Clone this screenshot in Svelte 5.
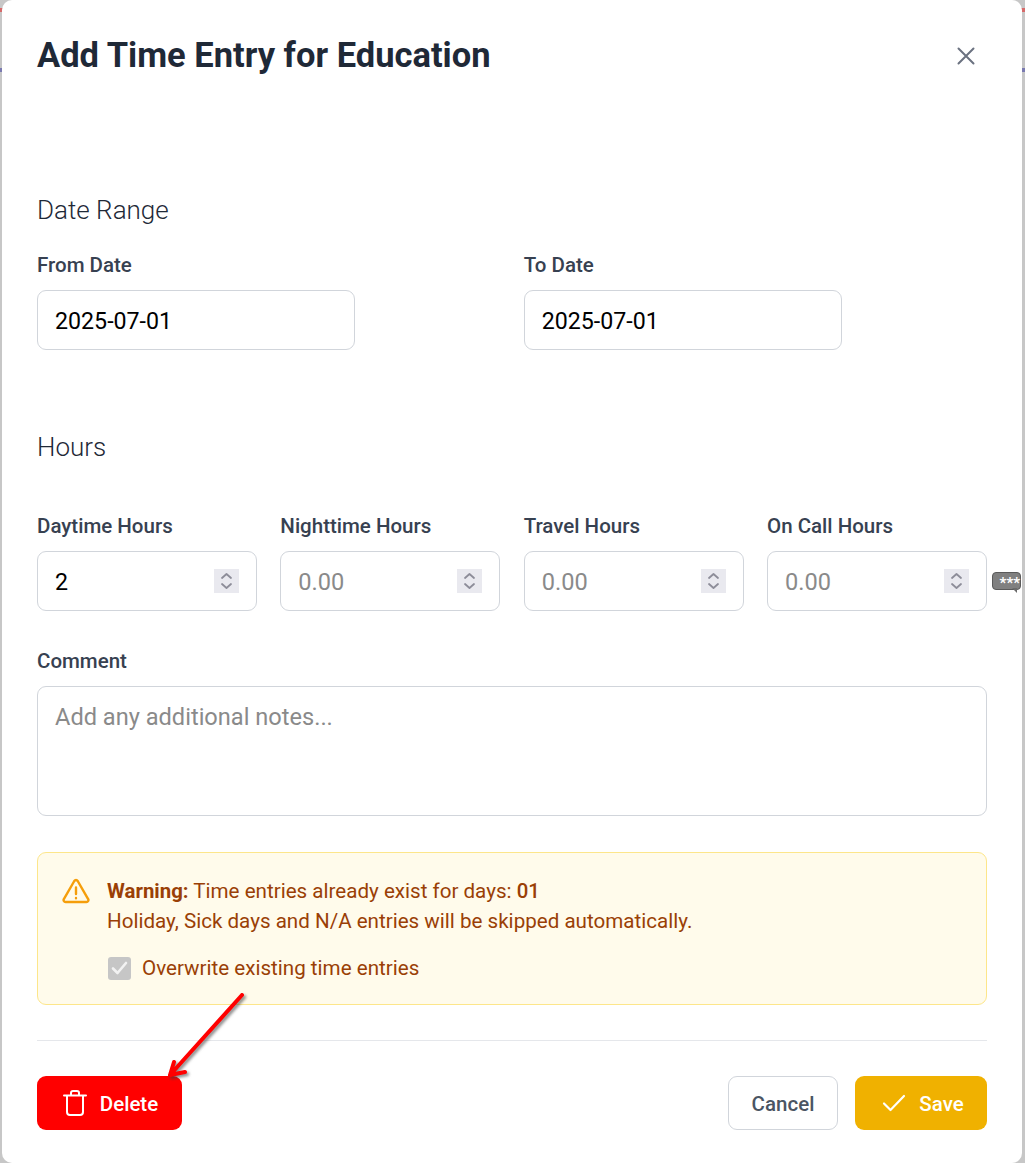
<script>
  const hours = [
    { label: 'Daytime Hours', value: '2' },
    { label: 'Nighttime Hours', value: '' },
    { label: 'Travel Hours', value: '' },
    { label: 'On Call Hours', value: '', note: true }
  ];
</script>

<div class="backdrop">
  <div class="modal">
    <header class="head">
      <h1>Add Time Entry for Education</h1>
      <button class="close" aria-label="Close">
        <svg width="20" height="20" viewBox="0 0 20 20" fill="none" stroke="currentColor" stroke-width="2" stroke-linecap="round"><path d="M2.500 2.500 17.500 17.500M17.500 2.500 2.500 17.500" /></svg>
      </button>
    </header>

    <h2 class="range-title">Date Range</h2>
    <div class="dates">
      <label class="field"><span class="lab">From Date</span><input class="box date" value="2025-07-01" /></label>
      <label class="field"><span class="lab">To Date</span><input class="box date" value="2025-07-01" /></label>
    </div>

    <h2 class="hours-title">Hours</h2>
    <div class="hours">
      {#each hours as h}
        <div class="field">
          <span class="lab">{h.label}</span>
          <div class="box num">
            <input value={h.value} placeholder="0.00" />
            <span class="spin">
              <svg width="13" height="20" viewBox="0 0 13 20" fill="none" stroke="#8d8d99" stroke-width="1.8" stroke-linecap="round" stroke-linejoin="round"><path d="M2 7 6.500 3 11 7M2 13l4.500 4 4.500-4" /></svg>
            </span>
            {#if h.note}
              <span class="note"><span class="stars">***</span><i></i></span>
            {/if}
          </div>
        </div>
      {/each}
    </div>

    <label class="field comment">
      <span class="lab">Comment</span>
      <textarea placeholder="Add any additional notes..."></textarea>
    </label>

    <div class="warn">
      <svg class="warn-ico" width="28" height="26" viewBox="0 0 28 26" fill="none" stroke="#f59e0b" stroke-width="2.4" stroke-linecap="round" stroke-linejoin="round"><path d="M12.300 3 2 20.800A2 2 0 0 0 3.700 24h20.600a2 2 0 0 0 1.700-3.200L15.700 3a2 2 0 0 0-3.400 0ZM14 9.500v6.500M14 20v.2" /></svg>
      <div class="warn-body">
        <p><b>Warning:</b> Time entries already exist for days: <b class="m">01</b></p>
        <p>Holiday, Sick days and N/A entries will be skipped automatically.</p>
        <div class="over">
          <span class="chk"><svg width="17" height="14" viewBox="0 0 17 14" fill="none" stroke="#f2f2f2" stroke-width="2.600" stroke-linecap="round" stroke-linejoin="round"><path d="m2 7.500 4.500 4.500L15 2" /></svg></span>
          <span>Overwrite existing time entries</span>
        </div>
      </div>
    </div>

    <footer class="foot">
      <button class="btn del">
        <svg width="24" height="26" viewBox="0 0 24 26" fill="none" stroke="#fff" stroke-width="2" stroke-linecap="round" stroke-linejoin="round"><path d="M1 5.500h22M4 5.500V22a3 3 0 0 0 3 3h10a3 3 0 0 0 3-3V5.500M8 5.500V3a2 2 0 0 1 2-2h4a2 2 0 0 1 2 2v2.500" /></svg>
        <span>Delete</span>
      </button>
      <span class="sp"></span>
      <button class="btn cancel">Cancel</button>
      <button class="btn save">
        <svg width="24" height="18" viewBox="0 0 24 18" fill="none" stroke="#fff" stroke-width="2.200" stroke-linecap="round" stroke-linejoin="round"><path d="m2 9.500 6.500 6.500L22 2" /></svg>
        <span>Save</span>
      </button>
    </footer>

    <svg class="arrow" width="100" height="100" viewBox="0 0 100 100" fill="none" aria-hidden="true">
      <path d="M82 6 10 86M14 73 10 86 25 83" stroke="#f00" stroke-width="4" stroke-linecap="round" stroke-linejoin="round" />
    </svg>
  </div>
</div>

<style>
  :global(body) {
    margin: 0;
    background: #fff;
  }
  .backdrop {
    height: 1163px;
    padding: 0 3px 0 2px;
    box-sizing: border-box;
    overflow: hidden;
    background:
      linear-gradient(#c7c7c7 8px, #d66a6a 8px, #d66a6a 12px, #c7c7c7 12px, #c7c7c7 68px, #7a7ab0 68px, #7a7ab0 72px, #c7c7c7 72px);
    font-family: Roboto, "Liberation Sans", sans-serif;
  }
  .modal {
    position: relative;
    height: 1163px;
    box-sizing: border-box;
    background: #fff;
    border-radius: 10px;
    padding: 0 35px;
  }
  .head {
    height: 110px;
    display: flex;
    justify-content: space-between;
    align-items: flex-start;
  }
  h1 {
    margin: 33px 0 0;
    font-size: 34.5px;
    line-height: 44px;
    font-weight: 700;
    color: #1f2937;
  }
  .close {
    margin: 46px 0 0;
    padding: 0;
    position: relative;
    left: -11px;
    border: 0;
    background: none;
    color: #6b7280;
    display: flex;
  }
  h2 {
    margin: 0;
    font-weight: 300;
    font-size: 26px;
    line-height: 32px;
    color: #1f2937;
  }
  .range-title { margin-top: 84px; }
  .dates, .hours {
    display: grid;
    column-gap: 23.4px;
  }
  .dates {
    grid-template-columns: repeat(2, minmax(0, 1fr));
    margin-top: 26px;
  }
  .hours {
    grid-template-columns: repeat(4, minmax(0, 1fr));
    margin-top: 50px;
  }
  .hours-title { margin-top: 81px; }
  .field { display: block; }
  .lab {
    display: block;
    font-size: 20.5px;
    line-height: 26px;
    font-weight: 500;
    color: #374151;
    margin-bottom: 12px;
  }
  .box {
    box-sizing: border-box;
    height: 60px;
    border: 1px solid #d1d5db;
    border-radius: 9px;
    background: #fff;
  }
  input, textarea {
    font-family: inherit;
    font-size: 23.2px;
    color: #000;
    outline: none;
  }
  input::placeholder, textarea::placeholder { color: #8a8a8a; opacity: 1; font-size: 23.6px; }
  .date {
    display: block;
    width: 318px;
    padding: 2px 17px 0;
  }
  .num {
    position: relative;
    display: flex;
    align-items: center;
    padding: 0 17px;
  }
  .num input {
    flex: 1;
    min-width: 0;
    border: 0;
    padding: 2px 0 0;
    background: none;
  }
  .spin {
    width: 25px;
    height: 24px;
    background: #e9e9ef;
    display: flex;
    align-items: center;
    justify-content: center;
  }
  .note {
    position: absolute;
    left: 224px;
    top: 20px;
    width: 27px;
    height: 16px;
    background: #808080;
    border: 1px solid #5a5a5a;
    border-radius: 4px;
    color: #fff;
    font-size: 15px;
    font-weight: 700;
    line-height: 21px;
    text-align: right;
  }
  .stars { display: block; }
  .note i {
    position: absolute;
    right: 3px;
    top: 15px;
    width: 0;
    height: 0;
    border-top: 5px solid #6a6a6a;
    border-left: 5px solid transparent;
  }
  .comment { margin-top: 37px; }
  textarea {
    display: block;
    box-sizing: border-box;
    width: 100%;
    height: 130px;
    padding: 15px 17px;
    border: 1px solid #d1d5db;
    border-radius: 9px;
    resize: none;
    line-height: 30px;
  }
  .warn {
    box-sizing: border-box;
    margin-top: 36px;
    height: 153px;
    display: flex;
    gap: 17px;
    padding: 23px 24px 0;
    border: 1px solid #fde68a;
    border-radius: 9px;
    background: #fffbeb;
    color: #9a3f06;
    font-size: 20.6px;
    line-height: 30px;
  }
  .warn-ico { margin-top: 2px; flex: none; }
  .warn-body p { margin: 0; }
  .warn-body b { font-weight: 700; font-size: 20.4px; }
  .warn-body b.m { font-weight: 500; }
  .over {
    display: flex;
    align-items: center;
    gap: 11px;
    margin-top: 17px;
  }
  .chk {
    width: 23px;
    height: 23px;
    margin-left: 1px;
    border-radius: 3px;
    background: #c6c6c6;
    display: flex;
    align-items: center;
    justify-content: center;
  }
  .foot {
    margin-top: 35px;
    padding-top: 35px;
    border-top: 1px solid #e5e7eb;
    display: flex;
    gap: 17px;
  }
  .sp { flex: 1; }
  .btn {
    height: 54px;
    border-radius: 9px;
    border: 0;
    font-family: inherit;
    font-size: 20.5px;
    font-weight: 500;
    display: flex;
    align-items: center;
    justify-content: center;
    padding: 2px 0 0;
  }
  .btn svg { margin-top: -2px; }
  .del { width: 145px; padding-left: 2px; background: #f00; color: #fff; gap: 13px; }
  .cancel { width: 110px; background: #fff; border: 1px solid #d1d5db; color: #4b5563; }
  .save { width: 132px; padding-left: 4px; background: #f0b100; color: #fff; gap: 13px; }
  .arrow {
    position: absolute;
    left: 158px;
    top: 989px;
    overflow: visible;
    filter: drop-shadow(2px 2px 1.5px rgba(60, 60, 60, .6));
  }
</style>
